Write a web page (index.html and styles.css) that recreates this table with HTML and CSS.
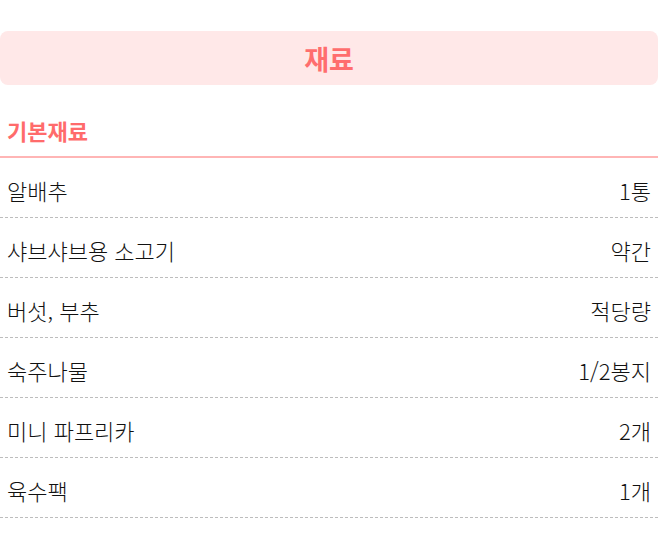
FILE: index.html
```html
<!DOCTYPE html>
<html lang="ko">
<head>
<meta charset="utf-8">
<link rel="stylesheet" href="styles.css">
</head>
<body>
<div class="page">
  <div class="title-box"><h1 class="title">재료</h1></div>
  <h2 class="subhead">기본재료</h2>
  <ul class="list">
    <li class="row"><span>알배추</span><span>1통</span></li>
    <li class="row"><span>샤브샤브용 소고기</span><span>약간</span></li>
    <li class="row"><span>버섯, 부추</span><span>적당량</span></li>
    <li class="row"><span>숙주나물</span><span>1/2봉지</span></li>
    <li class="row"><span>미니 파프리카</span><span>2개</span></li>
    <li class="row"><span>육수팩</span><span>1개</span></li>
  </ul>
</div>
</body>
</html>
```
FILE: styles.css
```css
html, body {
  margin: 0;
  padding: 0;
  background: #ffffff;
}
body {
  font-family: "Noto Sans CJK KR", "Noto Sans", sans-serif;
  color: #111111;
}
.page {
  padding-top: 31px;
}
.title-box {
  background: #ffe8e8;
  border-radius: 8px;
  height: 54px;
  display: flex;
  align-items: center;
  justify-content: center;
}
.title {
  margin: 0;
  font-size: 27px;
  font-weight: 700;
  color: #ff6e6e;
  line-height: 1;
}
.subhead {
  margin: 31px 0 0;
  padding: 0 7px 11px;
  font-size: 22px;
  font-weight: 700;
  line-height: 29px;
  color: #ff6b6b;
  border-bottom: 2px solid #ffb5b5;
}
.list {
  list-style: none;
  margin: 0;
  padding: 0;
}
.row {
  display: flex;
  justify-content: space-between;
  padding: 18px 7px 12px;
  font-size: 22px;
  font-weight: 300;
  line-height: 29px;
  border-bottom: 1px dashed #bdbdbd;
}
```
